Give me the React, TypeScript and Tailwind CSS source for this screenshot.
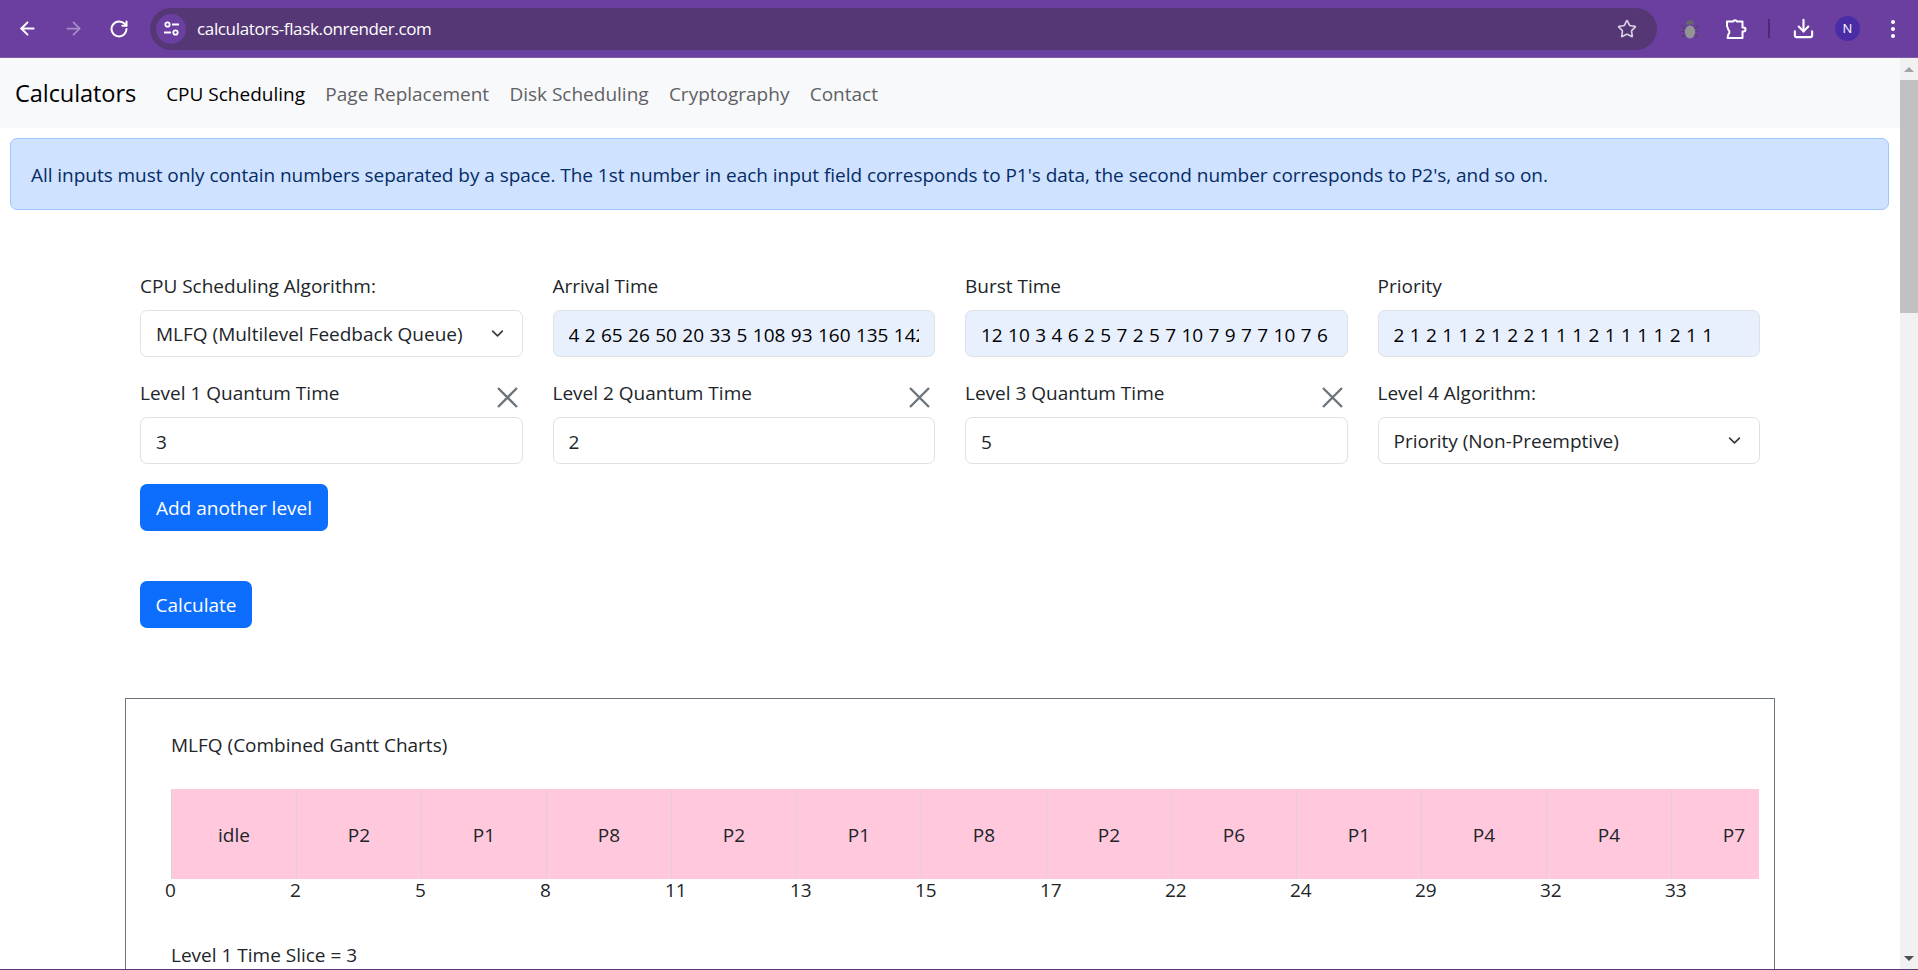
import { ArrowLeft, ArrowRight, RotateCw, Star, Download } from 'lucide-react';

const font = { fontFamily: '"Open Sans", "Noto Sans", sans-serif' };

const navLinks = ['CPU Scheduling', 'Page Replacement', 'Disk Scheduling', 'Cryptography', 'Contact'];
const cells = ['idle', 'P2', 'P1', 'P8', 'P2', 'P1', 'P8', 'P2', 'P6', 'P1', 'P4', 'P4', 'P7'];
const ticks = [0, 2, 5, 8, 11, 13, 15, 17, 22, 24, 29, 32, 33];

function Chevron() {
  return (
    <svg
      className="absolute right-[19px] top-[17px] w-[13px] h-[13px] pointer-events-none text-[#343a40]"
      viewBox="0 0 16 16"
      fill="none"
      stroke="currentColor"
      strokeWidth="2"
      strokeLinecap="round"
      strokeLinejoin="round"
    >
      <path d="m2 5 6 6 6-6" />
    </svg>
  );
}

function SelectField({ value }: { value: string }) {
  return (
    <div className="relative">
      <select
        defaultValue={value}
        className="w-full h-[47px] appearance-none bg-white border border-[#dee2e6] rounded-[7px] pl-[15px] pr-[40px] pt-[2px] text-[19px] text-[#212529] outline-none"
      >
        <option>{value}</option>
      </select>
      <Chevron />
    </div>
  );
}

function TextField({ value, filled }: { value: string; filled?: boolean }) {
  return (
    <input
      readOnly
      value={value}
      className={`w-full h-[47px] border border-[#dee2e6] rounded-[7px] px-[15px] pt-[2px] text-[19px] outline-none ${
        filled ? 'bg-[#e8f0fe] text-black [word-spacing:0.45px]' : 'bg-white text-[#212529]'
      }`}
    />
  );
}

function FieldLabel({ text, removable }: { text: string; removable?: boolean }) {
  return (
    <div className="relative h-[47px] flex items-center text-[19px] text-[#212529]">
      {text}
      {removable && (
        <svg
          className="absolute right-[5px] top-[17px] w-[21px] h-[21px] text-[#6c757d]"
          viewBox="0 0 21 21"
          fill="none"
          stroke="currentColor"
          strokeWidth="2.4"
        >
          <path d="M1 1l19 19M20 1 1 20" />
        </svg>
      )}
    </div>
  );
}

function BrowserBar() {
  return (
    <div className="h-[58px] bg-[#6b3fa0] flex items-center shrink-0 border-b border-[#7d5aa8]">
      <div className="w-[150px] shrink-0 flex items-center pl-[17px] gap-[25px] text-white">
        <ArrowLeft className="w-[21px] h-[21px]" strokeWidth={2.2} />
        <ArrowRight className="w-[21px] h-[21px] text-[#a78cc7]" strokeWidth={2} />
        <RotateCw className="w-[20px] h-[20px]" strokeWidth={2.4} />
      </div>
      <div className="w-[1507px] h-[42px] bg-[#553776] rounded-full flex items-center pl-[6px] pr-[20px]">
        <div className="w-[30px] h-[30px] rounded-full bg-[#6b3fa0] flex items-center justify-center">
          <svg className="w-[17px] h-[17px] text-white" viewBox="0 0 17 17" fill="none" stroke="currentColor" strokeWidth="1.8">
            <circle cx="4.5" cy="4.5" r="2.2" />
            <path d="M9 4.5h7M1 12.5h7" />
            <circle cx="12.5" cy="12.5" r="2.2" />
          </svg>
        </div>
        <span className="ml-[11px] text-[17px] text-white tracking-[-0.35px]">calculators-flask.onrender.com</span>
        <Star className="ml-auto w-[20px] h-[20px] text-[#d8d0e2]" strokeWidth={2} />
      </div>
      <svg className="ml-[24px] w-[18px] h-[20px]" viewBox="0 0 18 20" fill="none">
        <path d="M0.5 7l4 2.5M17.5 7l-4 2.5M0 12.5h4M18 12.5h-4M0.5 18l4-2.5M17.5 18l-4-2.5" stroke="#4f4360" strokeWidth="1.2" />
        <ellipse cx="9" cy="13" rx="5.2" ry="6.5" fill="#949494" />
        <path d="M4.8 5.5a4.2 4.5 0 0 1 8.4 0z" fill="#6a6670" />
      </svg>
      <svg className="ml-[26px] w-[22px] h-[22px] text-white" viewBox="0 0 22 22" fill="none" stroke="currentColor" strokeWidth="2" strokeLinejoin="round">
        <path d="M2 3.5h6a2.2 2.2 0 0 1 4 0h5.5v6h1a2 2 0 0 1 0 4h-1v6.5H2.5l1-4a2.6 2.6 0 0 0 0-4L2 8z" />
      </svg>
      <div className="ml-[21px] w-[2px] h-[19px] bg-[#4a2a75]" />
      <Download className="ml-[22px] w-[23px] h-[23px] text-white" strokeWidth={2.2} />
      <div className="ml-[20px] w-[25px] h-[25px] rounded-full bg-[#4a2ca5] text-white text-[13px] flex items-center justify-center">
        N
      </div>
      <div className="ml-[31px] flex flex-col gap-[3px]">
        <span className="w-[4px] h-[4px] rounded-full bg-white" />
        <span className="w-[4px] h-[4px] rounded-full bg-white" />
        <span className="w-[4px] h-[4px] rounded-full bg-white" />
      </div>
    </div>
  );
}

function Scrollbar() {
  return (
    <div className="w-[18px] shrink-0 bg-[#f1f1f1] flex flex-col items-center">
      <div className="h-[22px] flex items-center">
        <div className="w-0 h-0 border-x-[5px] border-x-transparent border-b-[5px] border-b-[#a3a3a3]" />
      </div>
      <div className="w-full h-[233px] bg-[#c1c1c1]" />
      <div className="mt-auto h-[22px] flex items-center">
        <div className="w-0 h-0 border-x-[5px] border-x-transparent border-t-[5px] border-t-[#505050]" />
      </div>
    </div>
  );
}

export default function App() {
  return (
    <div className="w-[1918px] h-[970px] overflow-hidden flex flex-col bg-white text-[#212529] border-b border-[#5a3d78]" style={font}>
      <BrowserBar />
      <div className="flex-1 min-h-0 flex">
        <main className="flex-1 min-w-0 overflow-hidden">
          <nav className="h-[70px] pt-[2px] bg-[#f8f9fa] flex items-center pl-[15px]">
            <span className="text-[23.6px] text-black mr-[30px] tracking-[-0.1px]">Calculators</span>
            <div className="flex gap-[20.3px] text-[19px]">
              {navLinks.map((link, i) => (
                <span key={link} className={i === 0 ? 'text-black' : 'text-[#5f6164]'}>
                  {link}
                </span>
              ))}
            </div>
          </nav>

          <div className="mt-[10px] ml-[10px] mr-[11px] h-[72px] pt-[2px] rounded-[7px] border border-[#9ec5fe] bg-[#cfe2ff] text-[#052c65] flex items-center pl-[20px] text-[19px] tracking-[-0.045px]">
            All inputs must only contain numbers separated by a space. The 1st number in each input field corresponds to P1's data, the second number corresponds to P2's, and so on.
          </div>

          <div className="pl-[140px] mt-[53px]">
            <div className="grid grid-cols-[382.5px_382.5px_382.5px_382.5px] gap-x-[30px] gap-y-[13px]">
              <div>
                <FieldLabel text="CPU Scheduling Algorithm:" />
                <SelectField value="MLFQ (Multilevel Feedback Queue)" />
              </div>
              <div>
                <FieldLabel text="Arrival Time" />
                <TextField filled value="4 2 65 26 50 20 33 5 108 93 160 135 142 170 185 190 200 210 220" />
              </div>
              <div>
                <FieldLabel text="Burst Time" />
                <TextField filled value="12 10 3 4 6 2 5 7 2 5 7 10 7 9 7 7 10 7 6" />
              </div>
              <div>
                <FieldLabel text="Priority" />
                <TextField filled value="2 1 2 1 1 2 1 2 2 1 1 1 2 1 1 1 1 2 1 1" />
              </div>
              <div>
                <FieldLabel text="Level 1 Quantum Time" removable />
                <TextField value="3" />
              </div>
              <div>
                <FieldLabel text="Level 2 Quantum Time" removable />
                <TextField value="2" />
              </div>
              <div>
                <FieldLabel text="Level 3 Quantum Time" removable />
                <TextField value="5" />
              </div>
              <div>
                <FieldLabel text="Level 4 Algorithm:" />
                <SelectField value="Priority (Non-Preemptive)" />
              </div>
            </div>

            <button className="mt-[20px] block w-[188px] h-[47px] pt-[2px] rounded-[7px] bg-[#0d6efd] text-white text-[19px]">
              Add another level
            </button>
            <button className="mt-[50px] block w-[112px] h-[47px] pt-[2px] rounded-[7px] bg-[#0d6efd] text-white text-[19px]">
              Calculate
            </button>
          </div>

          <section className="mt-[70px] ml-[125px] w-[1650px] h-[300px] border border-[#6c757d] pl-[45px] pr-[15px] pt-[34px]">
            <div className="text-[19px] leading-[25px]">MLFQ (Combined Gantt Charts)</div>
            <div className="mt-[31px] overflow-hidden">
              <div className="flex w-max h-[90px] bg-[#ffc8dd]">
                {cells.map((cell, i) => (
                  <div
                    key={i}
                    className="w-[125px] pt-[2px] shrink-0 border-l border-[#ddd0d8] flex items-center justify-center text-[19px]"
                  >
                    {cell}
                  </div>
                ))}
              </div>
            </div>
            <div className="flex w-max h-[22px] pt-[1px] -ml-[6px] text-[19px] leading-[21px]">
              {ticks.map((tick) => (
                <div key={tick} className="w-[125px] shrink-0">
                  {tick}
                </div>
              ))}
            </div>
            <div className="mt-[42px] text-[19px] leading-[25px]">Level 1 Time Slice = 3</div>
          </section>
        </main>
        <Scrollbar />
      </div>
    </div>
  );
}
